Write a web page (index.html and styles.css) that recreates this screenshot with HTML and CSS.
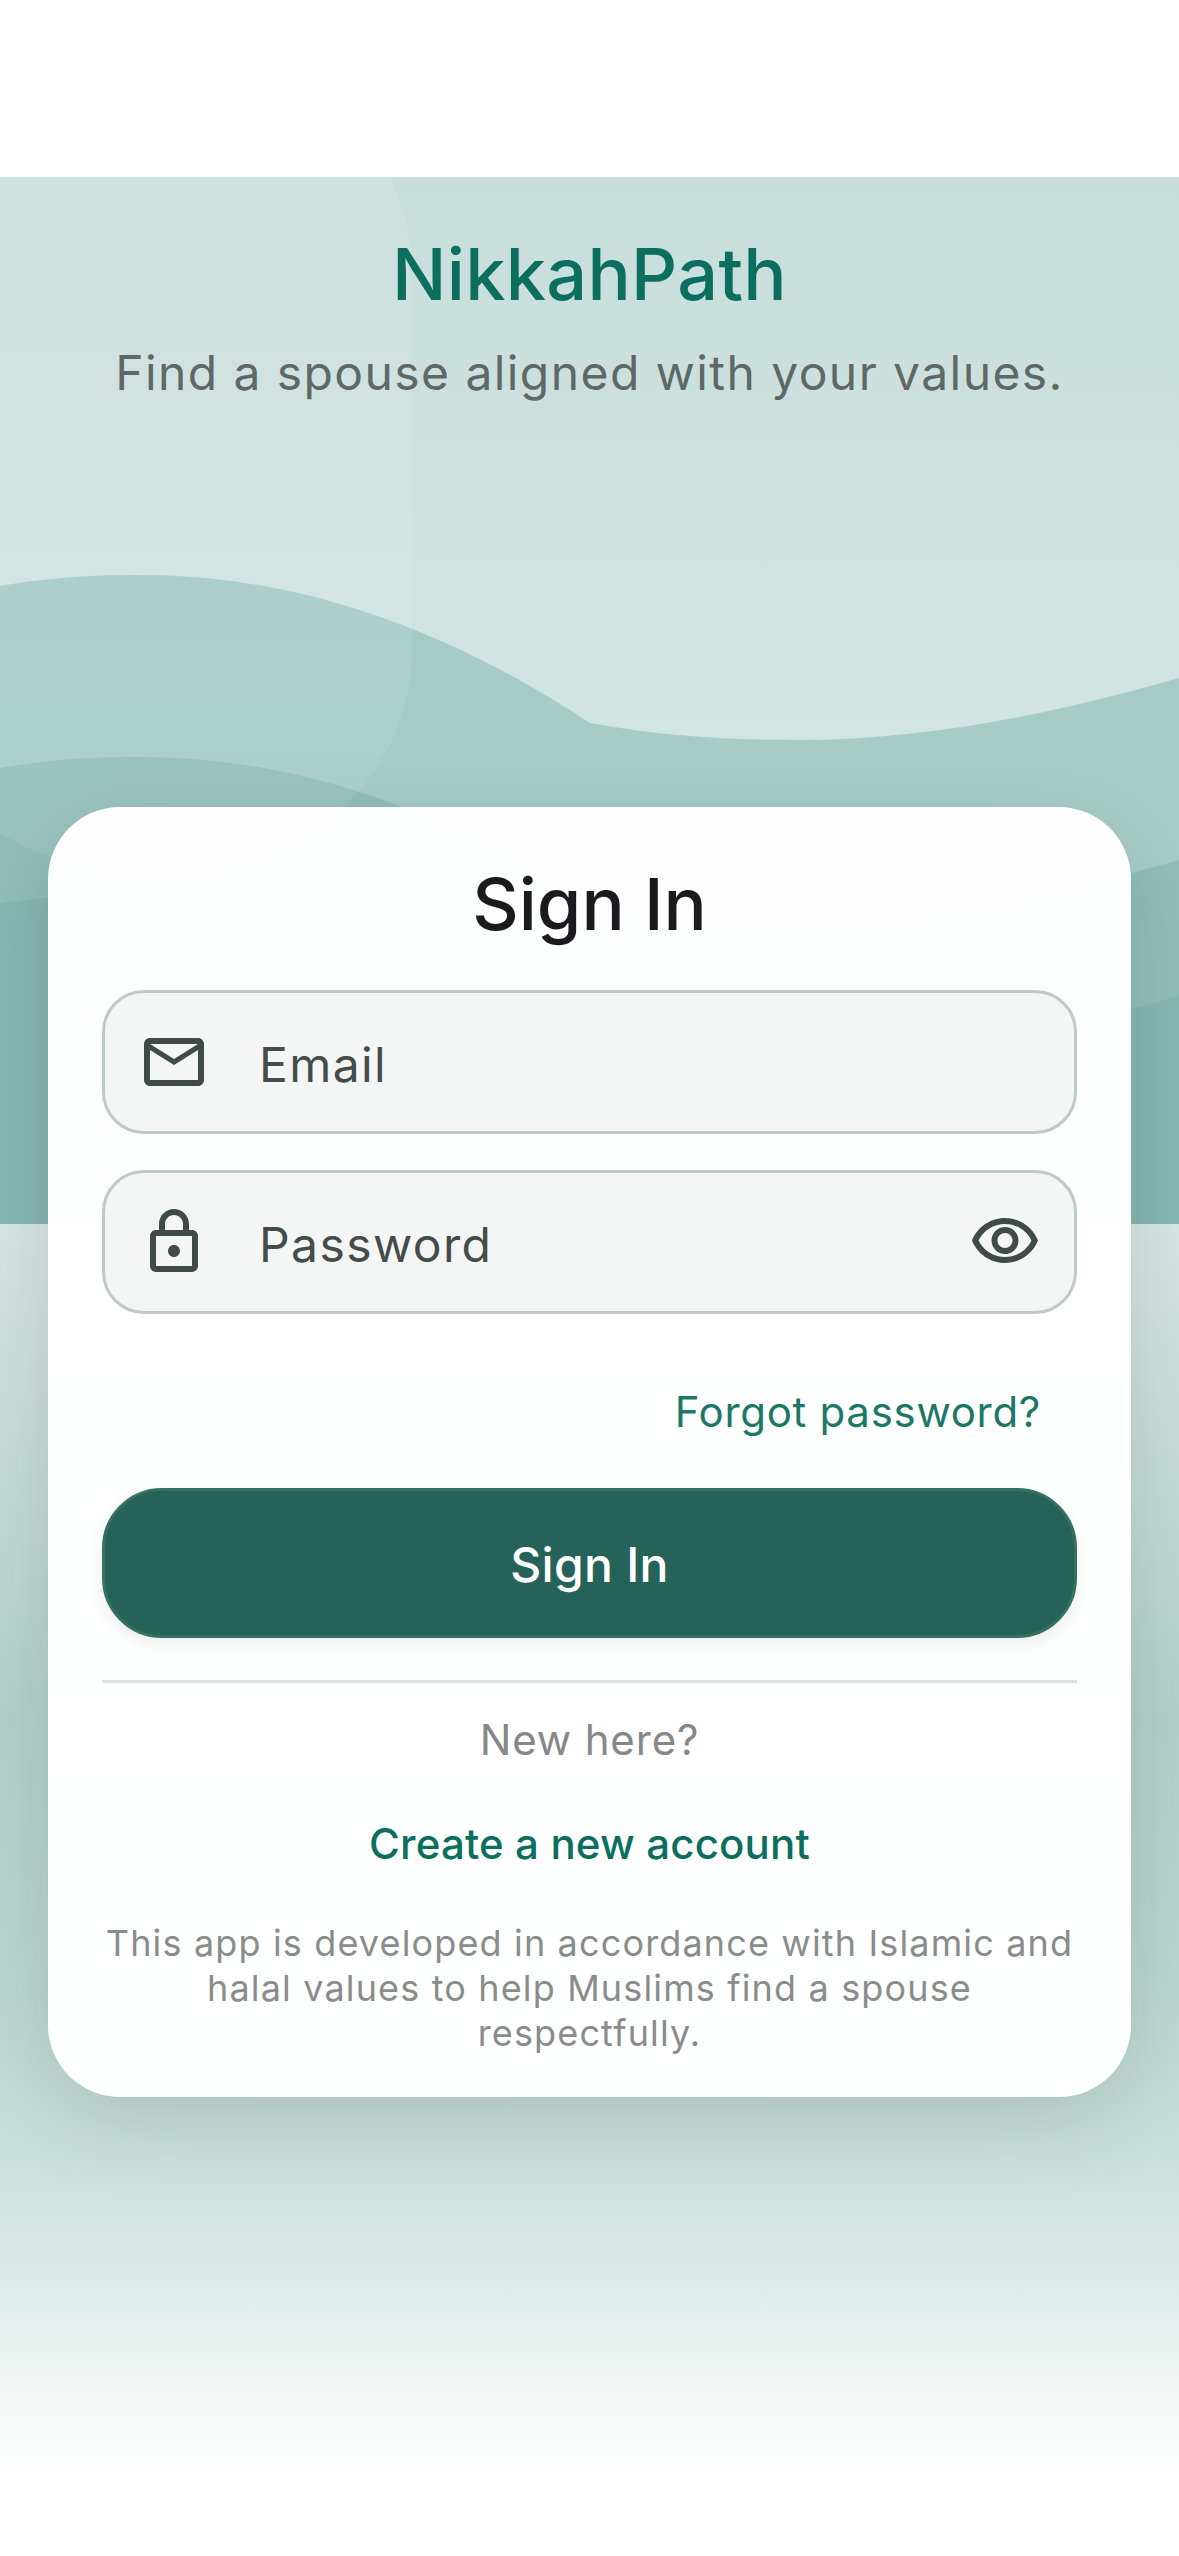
FILE: index.html
```html
<!DOCTYPE html>
<html lang="en">
<head>
<meta charset="utf-8">
<title>NikkahPath</title>
<link rel="stylesheet" href="styles.css">
</head>
<body>
<main class="screen">
  <div class="backdrop">
    <svg class="waves" viewBox="0 0 1179 1047" preserveAspectRatio="none" aria-hidden="true">
      <defs>
        <path id="wave" d="M0 409C40 402 85 398 128 398C290 395 445 450 590 546C655 558 722 563 797 563C930 563 1060 535 1179 501V1047H0Z"/>
      </defs>
      <use href="#wave" class="wave-a"/>
      <use href="#wave" class="wave-b" y="182"/>
      <use href="#wave" class="wave-c" y="318"/>
    </svg>
    <div class="blob"></div>
  </div>

  <header class="hero">
    <h1 class="brand">NikkahPath</h1>
    <p class="tagline">Find a spouse aligned with your values.</p>
  </header>

  <section class="card">
    <h2 class="card-title">Sign In</h2>

    <div class="field">
      <svg class="icon" viewBox="0 0 24 24" aria-hidden="true"><path d="M22 6c0-1.1-.9-2-2-2H4c-1.1 0-2 .9-2 2v12c0 1.1.9 2 2 2h16c1.1 0 2-.9 2-2V6zm-2 0l-8 5-8-5h16zm0 12H4V8l8 5 8-5v10z"/></svg>
      <span class="field-label">Email</span>
    </div>

    <div class="field field-password">
      <svg class="icon" viewBox="0 0 24 24" aria-hidden="true"><path d="M18 8h-1V6c0-2.76-2.24-5-5-5S7 3.24 7 6v2H6c-1.1 0-2 .9-2 2v10c0 1.1.9 2 2 2h12c1.1 0 2-.9 2-2V10c0-1.1-.9-2-2-2zM9 6c0-1.66 1.34-3 3-3s3 1.34 3 3v2H9V6zm9 14H6V10h12v10zm-6-3c1.1 0 2-.9 2-2s-.9-2-2-2-2 .9-2 2 .9 2 2 2z"/></svg>
      <span class="field-label">Password</span>
      <svg class="icon" viewBox="0 0 24 24" aria-hidden="true"><path d="M12 6c3.79 0 7.17 2.13 8.82 5.5C19.17 14.87 15.79 17 12 17s-7.17-2.13-8.82-5.5C4.83 8.13 8.21 6 12 6m0-2C7 4 2.73 7.11 1 11.5 2.73 15.89 7 19 12 19s9.27-3.11 11-7.5C21.27 7.11 17 4 12 4zm0 5c1.38 0 2.5 1.12 2.5 2.5S13.38 14 12 14s-2.5-1.12-2.5-2.5S10.62 9 12 9m0-2c-2.48 0-4.5 2.02-4.5 4.5S9.52 16 12 16s4.5-2.02 4.5-4.5S14.48 7 12 7z"/></svg>
    </div>

    <a class="forgot">Forgot password?</a>
    <button class="submit" type="button"><span class="submit-label">Sign In</span></button>
    <hr class="divider">
    <p class="new-here">New here?</p>
    <a class="create">Create a new account</a>
    <p class="disclaimer">This app is developed in accordance with Islamic and halal values to help Muslims find a spouse respectfully.</p>
  </section>
</main>
</body>
</html>
```
FILE: styles.css
```css
* { box-sizing: border-box; }

html, body {
  margin: 0;
  padding: 0;
  background: #fff;
}

.screen {
  position: relative;
  width: 1179px;
  height: 2556px;
  padding-top: 177px;
  overflow: hidden;
  font-family: Inter, "Liberation Sans", sans-serif;
  background: linear-gradient(180deg,
    #fff 0, #fff 1224px,
    #d8e7e4 1224px, #b3d1cb 1720px, #bcd7d2 2000px,
    #cfe3df 2200px, #e1edea 2300px, #f4f8f7 2400px, #fff 2480px);
}

.backdrop {
  position: absolute;
  left: 0;
  top: 177px;
  width: 1179px;
  height: 1047px;
  overflow: hidden;
  background: linear-gradient(180deg, #c8dedb 0, #d1e5e2 560px);
}

.waves {
  position: absolute;
  inset: 0;
  width: 100%;
  height: 100%;
}

.wave-a { fill: rgba(0, 105, 92, .2); }
.wave-b { fill: rgba(0, 105, 92, .13); }
.wave-c { fill: rgba(0, 105, 92, .07); }

.blob {
  position: absolute;
  left: -100px;
  top: -124px;
  width: 512px;
  height: 815px;
  border-radius: 220px;
  background: rgba(255, 255, 255, .09);
}

.hero {
  position: relative;
  height: 227px;
  padding-top: 52px;
  margin-bottom: 403px;
  text-align: center;
}

.brand {
  margin: 0;
  font-size: 72px;
  line-height: 90px;
  font-weight: 500;
  letter-spacing: .3px;
  color: #0b6e5f;
}

.tagline {
  margin: 24px 0 0;
  font-size: 48px;
  line-height: 60px;
  font-weight: 400;
  letter-spacing: 1.42px;
  color: #5f6866;
}

.card {
  position: relative;
  display: flex;
  flex-direction: column;
  width: 1083px;
  height: 1290px;
  margin-left: 48px;
  padding: 52px 54px 0;
  border-radius: 72px;
  background: rgba(255, 255, 255, .985);
  box-shadow: 0 24px 84px rgba(0, 0, 0, .13);
}

.card-title {
  margin: 0;
  font-size: 72px;
  line-height: 90px;
  font-weight: 500;
  text-align: center;
  color: #1b1b1f;
}

.field {
  display: flex;
  align-items: center;
  height: 144px;
  margin-top: 41px;
  padding: 0 33px;
  border: 3px solid #bdcac6;
  border-radius: 42px;
  background: #f4f6f5;
}

.field-password {
  margin-top: 36px;
}

.icon {
  flex: none;
  width: 72px;
  height: 72px;
  fill: #404b47;
}

.field-label {
  flex: 1;
  margin-left: 49px;
  padding-top: 6px;
  font-size: 48px;
  line-height: 60px;
  letter-spacing: 1.4px;
  color: #434c49;
}

.forgot {
  align-self: flex-end;
  margin-top: 68px;
  margin-right: 36px;
  font-size: 42px;
  line-height: 60px;
  letter-spacing: .7px;
  color: #1c7767;
}

.submit {
  height: 150px;
  margin-top: 46px;
  padding: 0;
  border: 3px solid #37705f;
  border-radius: 60px;
  background: #25635a;
  box-shadow: 0 6px 18px rgba(0, 0, 0, .08);
  font-family: inherit;
  font-size: 48px;
  font-weight: 500;
  letter-spacing: .3px;
  color: #fff;
}

.submit-label {
  display: block;
  padding-top: 3px;
}

.divider {
  width: 100%;
  height: 3px;
  margin: 42px 0 0;
  border: 0;
  background: #dbe3e1;
}

.new-here {
  margin: 27px 0 0;
  font-size: 42px;
  line-height: 60px;
  letter-spacing: .85px;
  text-align: center;
  color: #858887;
}

.create {
  margin-top: 44px;
  font-size: 42px;
  line-height: 60px;
  font-weight: 500;
  letter-spacing: .15px;
  text-align: center;
  color: #0b6e5f;
}

.disclaimer {
  margin: 47px 0 0;
  font-size: 36px;
  line-height: 45px;
  letter-spacing: 1.15px;
  text-align: center;
  color: #8a8c8b;
}
```
